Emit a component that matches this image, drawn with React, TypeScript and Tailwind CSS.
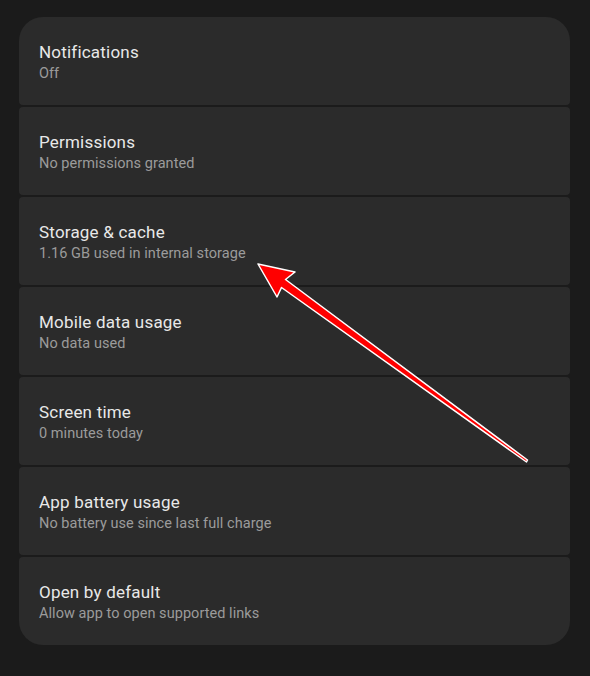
import React from "react";

const rows = [
  { title: "Notifications", sub: "Off" },
  { title: "Permissions", sub: "No permissions granted" },
  { title: "Storage & cache", sub: "1.16 GB used in internal storage" },
  { title: "Mobile data usage", sub: "No data used" },
  { title: "Screen time", sub: "0 minutes today" },
  { title: "App battery usage", sub: "No battery use since last full charge" },
  { title: "Open by default", sub: "Allow app to open supported links" },
];

export default function App() {
  return (
    <div
      className="relative w-[590px] h-[676px] bg-[#1b1b1b] overflow-hidden"
      style={{ fontFamily: "Roboto, 'Noto Sans', sans-serif" }}
    >
      <div className="flex flex-col gap-[2px] pt-[17px] pl-[19px] w-[570px]">
        {rows.map((r, i) => (
          <div
            key={r.title}
            className={`h-[88px] bg-[#2b2b2b] flex flex-col justify-center pl-[20px] pt-[4px] ${
              i === 0
                ? "rounded-t-[24px] rounded-b-[4px]"
                : i === rows.length - 1
                ? "rounded-b-[24px] rounded-t-[4px]"
                : "rounded-[4px]"
            }`}
          >
            <div className="text-[17px] leading-[22px] tracking-[0.2px] text-[#e8e8e8]">{r.title}</div>
            <div className="text-[14.5px] leading-[22px] tracking-[0.05px] text-[#9b9b9b]">{r.sub}</div>
          </div>
        ))}
      </div>

      {/* red annotation arrow */}
      <svg className="absolute left-0 top-0 pointer-events-none" width="590" height="676">
        <polygon
          points="258,264 295,272 285.5,279.5 527.5,460 526.5,462 281.5,287.5 277,297"
          fill="#ff0000"
          stroke="#ffffff"
          strokeWidth="1.5"
          strokeLinejoin="round"
        />
      </svg>
    </div>
  );
}
